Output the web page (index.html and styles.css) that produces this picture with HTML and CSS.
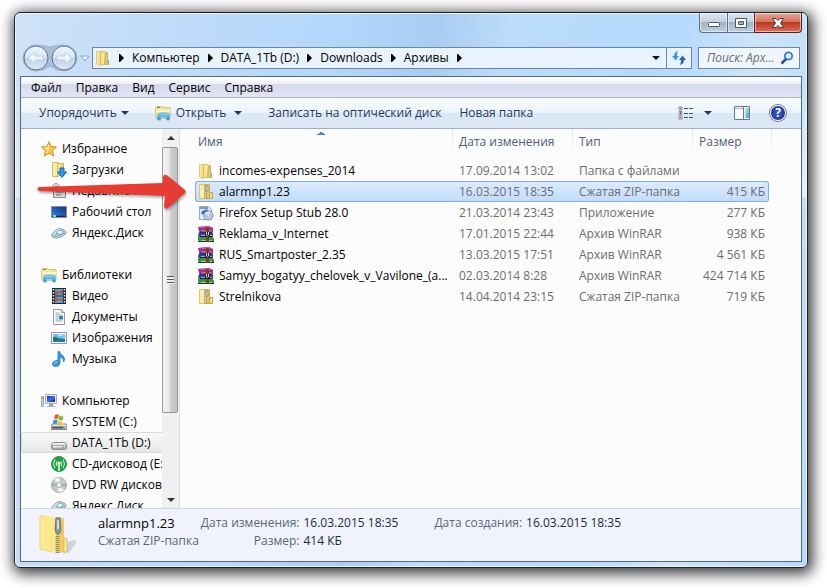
FILE: index.html
```html
<!DOCTYPE html>
<html lang="ru">
<head>
<meta charset="utf-8">
<title>Архивы</title>
<link rel="stylesheet" href="styles.css">
</head>
<body>
<svg class="defs" aria-hidden="true">
  <defs>
    <linearGradient id="gold" x1="0" x2="1" y1="0" y2="0"><stop offset="0" stop-color="#f9eba4"/><stop offset=".55" stop-color="#f3dc83"/><stop offset="1" stop-color="#dcb750"/></linearGradient>
    <linearGradient id="sky" x1="0" x2="0" y1="0" y2="1"><stop offset="0" stop-color="#8fdcf5"/><stop offset="1" stop-color="#2187cf"/></linearGradient>
    <linearGradient id="pane" x1="0" x2="1" y1="0" y2="1"><stop offset="0" stop-color="#c9eef6"/><stop offset="1" stop-color="#3fa3c4"/></linearGradient>
    <linearGradient id="metal" x1="0" x2="0" y1="0" y2="1"><stop offset="0" stop-color="#fbfbfc"/><stop offset="1" stop-color="#a3a8ad"/></linearGradient>
    <linearGradient id="screen" x1="0" x2="1" y1="0" y2="1"><stop offset="0" stop-color="#0b2fc4"/><stop offset=".5" stop-color="#3a73ea"/><stop offset="1" stop-color="#041a80"/></linearGradient>
    <linearGradient id="desktop" x1="0" x2="1" y1="1" y2="0"><stop offset="0" stop-color="#2f8be0"/><stop offset=".5" stop-color="#2358ac"/><stop offset="1" stop-color="#123274"/></linearGradient>
    <linearGradient id="orb" x1="0" x2="0" y1="0" y2="1"><stop offset="0" stop-color="#f0f6fc"/><stop offset=".48" stop-color="#d6e5f3"/><stop offset=".52" stop-color="#bfd2e4"/><stop offset="1" stop-color="#dcebf8"/></linearGradient>
  </defs>
  <symbol id="i-folder" viewBox="0 0 16 16"><path d="M1.500 1.500h6v13l-4 1-2-2z" fill="url(#gold)" stroke="#e3cb7c"/><path d="M5.500 3l3-2 2 1v11l-2 2-3-1z" fill="#f5e49a" stroke="#dcbb60"/><path d="M10.500 2.500h2v9l1 3h-4z" fill="#e4c563" stroke="#d6b254"/><path d="M13.500 10v4" stroke="#6ab4d9"/></symbol>
  <symbol id="i-zip" viewBox="0 0 16 16"><path d="M1.500 .5h5v14h-5z" fill="#fbefae" stroke="#e0c66e"/><path d="M6.500 .5h5v14h-5z" fill="url(#gold)" stroke="#d3b052"/><path d="M11.500 8.500h3v6h-3z" fill="#f5e192" stroke="#c69f3f"/><path d="M8 1v14" stroke="#5e6269" stroke-dasharray="1 1"/><path d="M9 2v13" stroke="#8d9097" stroke-dasharray="1 1"/><path d="M8 2h2v5h-2z" fill="#d8dde2" stroke="#6d7278" stroke-width=".6"/></symbol>
  <symbol id="i-lib" viewBox="0 0 16 16"><path d="M.5 2.500l1-1h5l1 1h7.500v11h-14z" fill="#f6e69d" stroke="#dcc170"/><path d="M2 2.500h3" stroke="#34a853"/><path d="M1 5h14v2H1z" fill="#fdf5c9"/><path d="M2.500 15v-4q0-3 3-3h6q3 0 3 3v4h-3v-3h-6v3z" fill="url(#sky)" stroke="#6bb6dc"/></symbol>
  <symbol id="i-star" viewBox="0 0 16 16"><path d="M8 .7l2.200 4.900 5.300.4-4 3.600 1.300 5.500L8 12.200l-4.800 2.900 1.300-5.500-4-3.600 5.300-.4z" fill="#fdc23a" stroke="#e08a28"/><path d="M8 2.500v8.500l-3.500 2L6 9 2.500 6.500l4-.5z" fill="#ffe48a"/></symbol>
  <symbol id="i-down" viewBox="0 0 16 16"><path d="M1.500 .5h6v14h-6z" fill="#f9ebaa" stroke="#d6b85b"/><path d="M6.500 1.500h6v12h-6z" fill="url(#gold)" stroke="#d6b85b"/><path d="M9 6h4v4h2.500L11 15.500 6.500 10H9z" fill="#2c98ec" stroke="#1365b9"/></symbol>
  <symbol id="i-recent" viewBox="0 0 16 16"><path d="M2.500 4.500h12v10h-12z" fill="#dedfe1" stroke="#85888c"/><circle cx="5" cy="4" r="3.500" fill="#f4f5f6" stroke="#999"/><path d="M5 2v2h2" stroke="#555" fill="none"/><path d="M5 9h7M5 12h5" stroke="#6e7378"/><path d="M9 5h4v3H9z" fill="#9da2a7"/></symbol>
  <symbol id="i-desk" viewBox="0 0 16 16"><path d="M.5 2.500h15v11H.5z" fill="#1f3a6b" stroke="#8392a8"/><path d="M1 3h14v8.500H1z" fill="url(#desktop)"/><path d="M1 12.500h14" stroke="#1a2a4c"/><path d="M2 12h3" stroke="#6ed1ff" stroke-width="2"/></symbol>
  <symbol id="i-yad" viewBox="0 0 16 16"><path d="M.5 10.500Q4 3.500 9 3.500q6 1.500 6.500 4.500-3 3.500-9 5-5.500 0-6-2.500z" fill="#c8dfe5" stroke="#7fa5b0"/><path d="M5 8.500l3.500-3.500 4 1.500-2.500 3z" fill="#f2f9fa" stroke="#7aa3ae"/><path d="M1 11q6 1 13-3" stroke="#7a9da7" fill="none"/></symbol>
  <symbol id="i-video" viewBox="0 0 16 16"><path d="M1 0h14v16H1z" fill="#222932"/><path d="M2.500 1v15M13.500 1v15" stroke="#e4e9ee" stroke-width="1.500" stroke-dasharray="1.500 1.500"/><path d="M4 1h8v6.500H4zM4 8.500h8V15H4z" fill="#4aa7e4"/><path d="M4 2l3 2 5-2v5L9 5 4 7zM4 9l4 2 4-1v4l-3-2-5 2z" fill="#bd5537"/></symbol>
  <symbol id="i-doc" viewBox="0 0 16 16"><path d="M2.500 .5h8l3 3v12h-11z" fill="#fcfdff" stroke="#9199a3"/><path d="M10.500 .5v3h3" fill="#dce4ee" stroke="#9199a3"/><path d="M4.500 4h4M4.500 6h7M4.500 8h3M4.500 10h3M4.500 12h7" stroke="#8da3b9"/><path d="M8 7h4v3.500H8z" fill="#377fbc"/></symbol>
  <symbol id="i-pic" viewBox="0 0 16 16"><path d="M.5 2.500h15v11H.5z" fill="#fff" stroke="#8f989f"/><path d="M2 4h12v8H2z" fill="#74c2ee"/><path d="M2 7q3-1 5 1l7 1v3H2z" fill="#277a69"/><path d="M2 10l12-1v3H2z" fill="#2a6fad"/><path d="M7 5h5" stroke="#fff"/></symbol>
  <symbol id="i-music" viewBox="0 0 16 16"><path d="M7 .5h1.500Q9 3 12 5q3 3 .5 6 .5-4-3.500-5v6q0 3-4 3.500-3.500 0-3.500-2.500 0-3 3.500-3.300L7 9.500z" fill="#2e9bea" stroke="#3f88c4"/><path d="M3 12.500q1-1.500 3-1.500" stroke="#a8e2ff" fill="none"/></symbol>
  <symbol id="i-pc" viewBox="0 0 16 16"><path d="M.5 3.500h2v10h-2z" fill="#d4d7da" stroke="#a2a6aa"/><path d="M4.500 1.500h11v9h-11z" fill="#eceeef" stroke="#a4abb2"/><path d="M6 3h8v6H6z" fill="url(#screen)"/><path d="M8 11h4v2H8z" fill="#9ca1a6"/><path d="M6 13.500h8" stroke="#b0b4b8"/><path d="M1 5h2" stroke="#35b32f"/></symbol>
  <symbol id="i-sys" viewBox="0 0 16 16"><path d="M1 10h14l1 2v3.500H0V12z" fill="url(#metal)" stroke="#70767c" stroke-width=".8"/><path d="M1 13.500h13" stroke="#525960" stroke-width="2"/><path d="M12 13.500h2" stroke="#43e063" stroke-width="2"/><path d="M4 1q2-1.500 4 0l-1 4q-2-1-4 0z" fill="#ef5a24"/><path d="M8.500 1.500q2 1.500 4 .5l-1 4q-2 1-4-.5z" fill="#7cbb26"/><path d="M2.700 6q2-1 4 0l-1 4q-2-1-4 0z" fill="#2a93dc"/><path d="M7.200 6.500q2 1.500 4 .5l-1 4q-2 1-4-.5z" fill="#fbc01f"/></symbol>
  <symbol id="i-drive" viewBox="0 0 16 16"><path d="M.5 9.500Q1 7.500 3 7.500h10q2 0 2.500 2v4q-1 1-2 1h-11q-1 0-2-1z" fill="url(#metal)" stroke="#8b8f93"/><path d="M1.500 10.500h13v2.500h-13z" fill="#e9ebed" stroke="#8b9095" stroke-width=".7"/><path d="M11 12h2" stroke="#2cba39"/></symbol>
  <symbol id="i-cd" viewBox="0 0 16 16"><circle cx="8" cy="8" r="7.500" fill="#21a244" stroke="#2f9549"/><path d="M4 3.500Q1 8 4 12M6 5.500Q4.500 8 6 10M12 3.500q3 4.500 0 8.500M10 5.500q1.500 2.500 0 4.500" stroke="#d6f7dc" fill="none"/><path d="M8 7v8" stroke="#eefbef" stroke-width="1.500"/><circle cx="8" cy="7" r="1.500" fill="#fff"/></symbol>
  <symbol id="i-dvd" viewBox="0 0 16 16"><circle cx="8" cy="8" r="7.500" fill="#c8cacc" stroke="#aaadb0"/><path d="M8 8L3 2.500Q6 0 9 1zM8 8l5 5.500q-3 2-6 1z" fill="#f3f4f5"/><path d="M8 8L1 6v4z" fill="#8fc49a"/><path d="M8 8l7-2v4z" fill="#aeb2b6"/><circle cx="8" cy="8" r="2.500" fill="#f6f6f6" stroke="#a5a9ad"/></symbol>
  <symbol id="i-setup" viewBox="0 0 16 16"><path d="M1.500 1.500h9l3 3v10h-12z" fill="#dfe8f5" stroke="#9aa8bd"/><path d="M2 3h8" stroke="#8e9aae" stroke-width="2"/><path d="M3 8q1-3 5-3l-1-2 4 3-3 3v-2q-2 0-3 3z" fill="#2e73d4"/><circle cx="10.500" cy="10.500" r="4.500" fill="#bdd0f0" stroke="#6a87c0"/><path d="M10.500 10.500L7 8.500q2-2.500 5-2z" fill="#f2f7ff"/><circle cx="10.500" cy="10.500" r="1.500" fill="#fff" stroke="#6c85b5" stroke-width=".6"/></symbol>
  <symbol id="i-rar" viewBox="0 0 16 16"><path d="M0 1l11-1 4 2v4l-1 1H2L1 5z" fill="#a42a8b"/><path d="M1 6l12-.5 2 1.500v4H2l-2-1z" fill="#31429c"/><path d="M0 10.500h14l2 2V16H2l-2-2z" fill="#379342"/><path d="M0 1l11-1 4 2H4z" fill="#c35aab"/><path d="M2 6h12M2 10.500h12" stroke="#26152f"/><path d="M3 5h11M3 9.500h11M3 14.500h11" stroke="#cfc8d8" stroke-width=".8"/><path d="M0 15.500h16" stroke="#17401d"/><path d="M8 1h3v15H8z" fill="#7d3b20"/><path d="M7 6h5v5H7z" fill="#222"/><path d="M8.500 6v3q1 1.500 2 0V6" fill="none" stroke="#d0d2d4"/></symbol>
  <symbol id="i-views" viewBox="0 0 16 14"><path d="M1 1h3v3H1zM1 5.500h3v3H1zM1 10h3v3H1z" fill="#fff" stroke="#7c8ba3"/><path d="M2 2.500h1" stroke="#2a62b8"/><path d="M2 7h1" stroke="#e03a26" stroke-width="2"/><path d="M2 11.500h1" stroke="#2a62b8"/><path d="M6 2.500h10M6 7.500h10M6 11.500h10" stroke="#44546c" stroke-dasharray="4 1"/></symbol>
  <symbol id="i-preview" viewBox="0 0 16 14"><path d="M.5 .5h15v13H.5z" fill="#fdfefe" stroke="#5f7a98"/><path d="M1 2.500h9" stroke="#a7b9cb"/><path d="M9.500 1v12" stroke="#5f7a98"/><path d="M11 2h4v10h-4z" fill="url(#pane)"/></symbol>
  <symbol id="a-down" viewBox="0 0 8 4"><path d="M0 0h8L4 4z" fill="currentColor"/></symbol>
  <symbol id="a-right" viewBox="0 0 5 8"><path d="M0 0h1l4 4-4 4H0z" fill="currentColor"/></symbol>
</svg>

<main class="window">
  <header class="titlebar">
    <div class="caption">
      <button class="cap" aria-label="Свернуть"><svg width="14" height="12" viewBox="0 0 14 12"><rect x="1.500" y="5.500" width="11" height="4" rx="1" fill="#fff" stroke="#4e5767"/></svg></button>
      <button class="cap" aria-label="Развернуть"><svg width="14" height="12" viewBox="0 0 14 12"><path d="M1.500 1.500h11v9h-11zM4.500 4.500v3h5v-3z" fill="#fff" fill-rule="evenodd" stroke="#4e5767"/></svg></button>
      <button class="cap close" aria-label="Закрыть"><svg width="14" height="12" viewBox="0 0 14 12"><path d="M1.500 1.500h3.500l2 2 2-2h3.500L9.500 6l3 4.500H9l-2-2-2 2H1.500L4.500 6z" fill="#fff" stroke="#5a3b42"/></svg></button>
    </div>
    <div class="navbar">
      <div class="travel">
        <svg width="56" height="28" viewBox="0 0 56 28" aria-hidden="true">
          <path d="M14 1q8 0 14 2 6-2 14-2a13 13 0 0 1 0 26q-8 0-14-5-6 5-14 5a13 13 0 0 1 0-26z" fill="#a7bfd7" stroke="#9fb5cc"/>
          <circle cx="14" cy="14" r="12" fill="url(#orb)" stroke="#5d7187"/><circle cx="42" cy="14" r="12" fill="url(#orb)" stroke="#5d7187"/>
          <path d="M6 14l7-6v4h8v4h-8v4zM50 14l-7-6v4h-8v4h8v4z" fill="#eef5fb" stroke="#c2d1df"/>
        </svg>
        <svg width="10" height="7" viewBox="0 0 10 7" aria-hidden="true"><path d="M1 1h8L5 6z" fill="#e7f1fb" stroke="#8fa5bd"/></svg>
      </div>
      <nav class="address" aria-label="Путь">
        <svg class="ico"><use href="#i-folder"/></svg>
        <svg class="ar"><use href="#a-right"/></svg><a href="#">Компьютер</a>
        <svg class="ar"><use href="#a-right"/></svg><a href="#">DATA_1Tb (D:)</a>
        <svg class="ar"><use href="#a-right"/></svg><a href="#">Downloads</a>
        <svg class="ar"><use href="#a-right"/></svg><a href="#">Архивы</a>
        <svg class="ar"><use href="#a-right"/></svg>
        <button class="history" aria-label="Предыдущие расположения"><svg class="ad"><use href="#a-down"/></svg></button>
        <button class="refresh" aria-label="Обновить"><svg width="16" height="14" viewBox="0 0 16 14"><path d="M7 0Q3 1 3 5H1l3.500 4.500L8 5H6q0-3 1-5z" fill="#3e9ad6"/><path d="M9 14q4-1 4-5h2l-3.500-4.500L8 9h2q0 3-1 5z" fill="#2368b0"/></svg></button>
      </nav>
      <label class="search"><input type="text" placeholder="Поиск: Арх..." aria-label="Поиск"><svg width="14" height="14" viewBox="0 0 14 14"><circle cx="8.500" cy="5" r="3.700" fill="#d9ecfb" stroke="#2f80c9" stroke-width="1.800"/><path d="M6 8l-4.500 4.500" stroke="#24529b" stroke-width="2.500"/></svg></label>
    </div>
  </header>

  <section class="client">
    <nav class="menubar">
      <button>Файл</button><button>Правка</button><button>Вид</button><button>Сервис</button><button>Справка</button>
    </nav>
    <div class="toolbar">
      <button class="organize">Упорядочить <svg class="ad"><use href="#a-down"/></svg></button>
      <button class="open"><svg class="ico"><use href="#i-lib"/></svg>Открыть</button>
      <button class="more" aria-label="Открыть с помощью"><svg class="ad"><use href="#a-down"/></svg></button>
      <button class="burn">Записать на оптический диск</button>
      <button>Новая папка</button>
      <div class="right">
        <button aria-label="Вид списка"><svg width="16" height="14"><use href="#i-views"/></svg></button>
        <button class="viewmenu" aria-label="Другие виды"><svg class="ad"><use href="#a-down"/></svg></button>
        <button class="preview" aria-label="Область просмотра"><svg width="16" height="14"><use href="#i-preview"/></svg></button>
        <button class="help" aria-label="Справка">?</button>
      </div>
    </div>

    <div class="content">
      <aside class="sidebar">
        <div class="tree">
          <ul>
            <li class="top"><svg class="ico"><use href="#i-star"/></svg>Избранное</li>
            <li><svg class="ico"><use href="#i-down"/></svg>Загрузки</li>
            <li><svg class="ico"><use href="#i-recent"/></svg>Недавние места</li>
            <li><svg class="ico"><use href="#i-desk"/></svg>Рабочий стол</li>
            <li><svg class="ico"><use href="#i-yad"/></svg>Яндекс.Диск</li>
          </ul>
          <ul>
            <li class="top"><svg class="ico"><use href="#i-lib"/></svg>Библиотеки</li>
            <li><svg class="ico"><use href="#i-video"/></svg>Видео</li>
            <li><svg class="ico"><use href="#i-doc"/></svg>Документы</li>
            <li><svg class="ico"><use href="#i-pic"/></svg>Изображения</li>
            <li><svg class="ico"><use href="#i-music"/></svg>Музыка</li>
          </ul>
          <ul>
            <li class="top"><svg class="ico"><use href="#i-pc"/></svg>Компьютер</li>
            <li><svg class="ico"><use href="#i-sys"/></svg>SYSTEM (C:)</li>
            <li class="current"><svg class="ico"><use href="#i-drive"/></svg>DATA_1Tb (D:)</li>
            <li><svg class="ico"><use href="#i-cd"/></svg>CD-дисковод (E:)</li>
            <li><svg class="ico"><use href="#i-dvd"/></svg>DVD RW дисковод</li>
            <li><svg class="ico"><use href="#i-yad"/></svg>Яндекс.Диск</li>
          </ul>
        </div>
        <div class="scroll">
          <button class="up" aria-label="Вверх"><svg class="ad"><use href="#a-down"/></svg></button>
          <div class="thumb"><i></i></div>
          <button aria-label="Вниз"><svg class="ad"><use href="#a-down"/></svg></button>
        </div>
      </aside>

      <div class="files">
        <table>
          <colgroup><col class="c-name"><col class="c-mid"><col class="c-mid"><col class="c-size"><col class="c-end"></colgroup>
          <thead><tr><th class="sorted">Имя</th><th>Дата изменения</th><th>Тип</th><th colspan="2">Размер</th></tr></thead>
          <tbody>
            <tr><td><span class="file"><svg class="ico"><use href="#i-folder"/></svg>incomes-expenses_2014</span></td><td>17.09.2014 13:02</td><td>Папка с файлами</td><td></td></tr>
            <tr class="selected"><td><span class="file"><svg class="ico"><use href="#i-zip"/></svg>alarmnp1.23</span></td><td>16.03.2015 18:35</td><td>Сжатая ZIP-папка</td><td>415 КБ</td></tr>
            <tr><td><span class="file"><svg class="ico"><use href="#i-setup"/></svg>Firefox Setup Stub 28.0</span></td><td>21.03.2014 23:43</td><td>Приложение</td><td>277 КБ</td></tr>
            <tr><td><span class="file"><svg class="ico"><use href="#i-rar"/></svg>Reklama_v_Internet</span></td><td>17.01.2015 22:44</td><td>Архив WinRAR</td><td>938 КБ</td></tr>
            <tr><td><span class="file"><svg class="ico"><use href="#i-rar"/></svg>RUS_Smartposter_2.35</span></td><td>13.03.2015 17:51</td><td>Архив WinRAR</td><td>4 561 КБ</td></tr>
            <tr><td><span class="file"><svg class="ico"><use href="#i-rar"/></svg>Samyy_bogatyy_chelovek_v_Vavilone_(a...</span></td><td>02.03.2014 8:28</td><td>Архив WinRAR</td><td>424 714 КБ</td></tr>
            <tr><td><span class="file"><svg class="ico"><use href="#i-zip"/></svg>Strelnikova</span></td><td>14.04.2014 23:15</td><td>Сжатая ZIP-папка</td><td>719 КБ</td></tr>
          </tbody>
        </table>
      </div>

      <svg class="pointer" width="156" height="40" viewBox="0 0 156 40" aria-hidden="true"><path d="M4 13L128 9V3q1-4 5-1L150 16q1 2 0 3L133 34q-4 2-4-2l1-10L4 17q-3-2 0-4z" fill="#e63c31"/></svg>
    </div>

    <footer class="details">
      <svg width="40" height="42" viewBox="0 0 40 42" aria-hidden="true"><path d="M26 38l3-10 6-2q3 0 2 3L30 39z" fill="#cdd2dc"/><path d="M1 2l12 2v34L1 35z" fill="#fbeb9b" stroke="#ecd27a"/><path d="M3 1l20 3v35L6 36z" fill="#fbe88c"/><path d="M17 3l8 1v34l-8 1z" fill="#efcd63"/><path d="M25 24l3 1v12l-3 2z" fill="#fdf0ae" stroke="#dcb64f"/><path d="M18.500 22v17" stroke="#8d8a80" stroke-width="4" stroke-dasharray="1 1"/><path d="M17 4h4l1 12q-2 7-5 3l-1-4z" fill="#8e979f" stroke="#6b747d"/><path d="M19 6v9" stroke="#eef1f3" stroke-width="1.500"/></svg>
      <div class="title"><strong>alarmnp1.23</strong><span>Сжатая ZIP-папка</span></div>
      <dl class="first"><dt>Дата изменения:</dt><dd>16.03.2015 18:35</dd><dt>Размер:</dt><dd>414 КБ</dd></dl>
      <dl><dt>Дата создания:</dt><dd>16.03.2015 18:35</dd></dl>
    </footer>
  </section>
</main>
</body>
</html>
```
FILE: styles.css
```css
* { box-sizing: border-box; }

body {
  margin: 0;
  height: 100vh;
  padding: 12px 19px 20px 14px;
  background: #fff;
  font: 12px/16px "Open Sans", "Noto Sans", sans-serif;
  color: #000;
  overflow: hidden;
}

button {
  font: inherit;
  color: inherit;
  background: none;
  border: 0;
  padding: 0;
  display: flex;
  align-items: center;
  white-space: nowrap;
}

svg { display: block; flex: none; }
.defs { position: absolute; width: 0; height: 0; }
.ico { width: 16px; height: 16px; }
.ad { width: 8px; height: 4px; }
.ar { width: 5px; height: 8px; }

.window {
  height: 100%;
  display: flex;
  flex-direction: column;
  padding: 0 5px 5px;
  border: 1px solid #1d2127;
  border-radius: 6px;
  background:
    linear-gradient(rgba(224, 239, 253, 0) 60px, rgba(228, 241, 253, .8)) left top / 6px 184px no-repeat,
    linear-gradient(rgba(224, 239, 253, 0) 60px, rgba(236, 245, 254, .8)) right top / 6px 184px no-repeat,
    linear-gradient(100deg, #cfe2f7 0, #bcdafa 22%, #b3d8fc 36%, #a9cdf2 48%, #bbdcfb 56%, #b4dafd 75%, #cde4f8 84%, #b6d9fa 100%);
  box-shadow: inset 0 0 0 1px #eaf5ff, 2px 3px 14px 3px rgba(0, 0, 0, .75);
}

.titlebar { display: flex; flex-direction: column; height: 63px; }

.caption { display: flex; align-self: flex-end; height: 20px; }
.cap {
  width: 27px;
  justify-content: center;
  border: 1px solid #5f6e80;
  border-top: 0;
  border-right-width: 0;
  background: linear-gradient(#dbe7f2 0, #c4d2e0 45%, #9fb3c7 50%, #bccfe1 100%);
  box-shadow: inset 0 0 0 1px rgba(255, 255, 255, .5);
}
.cap:first-child { width: 28px; border-radius: 0 0 0 4px; }
.close {
  width: 48px;
  border-color: #5b1d1c;
  border-right-width: 1px;
  border-radius: 0 0 4px 0;
  background: linear-gradient(#e5a797 0, #d4735d 45%, #bb3722 50%, #d9725a 100%);
}

.navbar { display: flex; align-items: center; padding: 11px 2px 0 2px; }
.travel { display: flex; align-items: center; gap: 2px; width: 70px; }

.address, .search {
  height: 22px;
  display: flex;
  align-items: center;
  border: 1px solid #6f86a0;
  background: #e9f3fd;
}
.address { flex: 1; min-width: 0; gap: 8px; padding-left: 2px; }
.address a { color: #000; text-decoration: none; white-space: nowrap; }
.history { margin-left: auto; margin-right: -2px; color: #000a5c; }
.refresh { align-self: stretch; width: 25px; justify-content: center; border-left: 1px solid #6f86a0; }
.search { width: 102px; margin-left: 6px; padding: 0 5px 0 8px; background: #f0f6fd; }
.search input {
  flex: 1;
  min-width: 0;
  padding: 0;
  border: 0;
  outline: 0;
  background: none;
  font: italic 12px/16px "Open Sans", "Noto Sans", sans-serif;
}
.search input::placeholder { color: #6d6d6d; opacity: 1; }

.client {
  position: relative;
  flex: 1;
  min-height: 0;
  display: flex;
  flex-direction: column;
  border: 1px solid #56677a;
  background: #fcfcfc;
}

.menubar {
  display: flex;
  gap: 14px;
  height: 21px;
  padding: 2px 10px 0;
  border-bottom: 1px solid #a9b4cb;
  background: linear-gradient(#fff 0, #eff1f9 33%, #d5daec 34%, #e1e5f4 100%);
}

.toolbar {
  display: flex;
  align-items: center;
  height: 31px;
  padding: 0 15px 0 18px;
  border-bottom: 1px solid #a0afc8;
  background: linear-gradient(#fafdff 0, #eaf3fb 50%, #dce7f5 51%, #dde8f6 100%);
  color: #1e395b;
}
.organize { gap: 4px; }
.open { gap: 5px; margin-left: 26px; }
.more { margin-left: 8px; }
.burn { margin: 0 18px 0 26px; }
.right { display: flex; align-items: center; margin-left: auto; }
.viewmenu { margin-left: 10px; }
.preview { margin-left: 22px; }
.help {
  width: 16px;
  height: 16px;
  margin-left: 20px;
  justify-content: center;
  border: 1px solid #e9edf6;
  border-radius: 50%;
  background: radial-gradient(#3d62d2, #10298a);
  box-shadow: 0 0 0 1px #6f7682;
  color: #fff;
  font-weight: bold;
}

.content { position: relative; flex: 1; min-height: 0; display: flex; }

.sidebar { display: flex; width: 159px; border-right: 1px solid #d5e2f2; }
.tree { flex: 1; min-width: 0; overflow: hidden; padding-top: 9px; }
.tree ul { margin: 0 0 21px; padding: 0; list-style: none; }
.tree li {
  display: flex;
  align-items: center;
  gap: 5px;
  height: 21px;
  padding-left: 30px;
  white-space: nowrap;
}
.tree .top { padding-left: 20px; }
.tree .current {
  border: 1px solid #dadada;
  border-right: 0;
  border-radius: 3px 0 0 3px;
  padding-left: 29px;
  background: linear-gradient(#fafafa, #e6e6e6);
}

.scroll { display: flex; flex-direction: column; width: 17px; background: #f0f0f0; }
.scroll button { height: 17px; justify-content: center; color: #333; }
.scroll .up svg { transform: rotate(180deg); }
.thumb {
  height: 266px;
  margin: 1px 1px auto 0;
  display: grid;
  place-items: center;
  border: 1px solid #979797;
  border-radius: 2px;
  background: linear-gradient(90deg, #f5f5f5 0, #e6e6e8 48%, #cfcfd2 52%, #bfc0c4 100%);
}
.thumb i { width: 7px; height: 8px; background: repeating-linear-gradient(#55585c 0 1px, #eee 1px 3px); }

.files { flex: 1; min-width: 0; padding-left: 15px; }
table { width: 577px; table-layout: fixed; border-collapse: separate; border-spacing: 0; }
.c-name { width: 258px; }
.c-mid { width: 120px; }
.c-size { width: 76px; }
.c-end { width: 3px; }
th {
  height: 31px;
  padding: 5px 6px 0;
  vertical-align: top;
  text-align: left;
  font-weight: normal;
  color: #4c607a;
  background: linear-gradient(#d8e4f3, #fcfcfc) right top / 1px 25px no-repeat;
}
th:first-child { padding-left: 3px; }
.sorted {
  background:
    conic-gradient(from 135deg at 50% 0, #4d86ad 90deg, transparent 0) 122px 2px / 8px 4px no-repeat,
    linear-gradient(#d8e4f3, #fcfcfc) right top / 1px 25px no-repeat;
}
td {
  height: 21px;
  padding: 0 6px;
  border: 0 solid #84acdd;
  white-space: nowrap;
  color: #6d6d6d;
}
td:first-child { padding-left: 3px; color: #000; }
td:nth-child(4) { padding: 0 4px 0 0; text-align: right; }
.file { display: flex; align-items: center; gap: 5px; }
.selected td {
  border-width: 1px 0;
  background: linear-gradient(#dcebfc, #c1dcfc);
}
.selected td:first-child { border-left-width: 1px; border-radius: 3px 0 0 3px; padding-left: 2px; }
.selected td:last-child { border-right-width: 1px; border-radius: 0 3px 3px 0; padding-right: 3px; }

.pointer { position: absolute; left: 14px; top: 45px; filter: drop-shadow(1px 2px 1px rgba(0, 0, 0, .3)); }

.details {
  display: flex;
  height: 53px;
  padding: 5px 18px 0;
  border-top: 1px solid #c9d6e9;
  background: #f0f3fb;
  white-space: nowrap;
  line-height: 18px;
}
.title { display: flex; flex-direction: column; margin-left: 19px; color: #5a6779; }
.title strong { font-size: 13px; font-weight: normal; color: #000; }
.details dl { display: grid; grid-template-columns: auto auto; column-gap: 4px; align-content: start; margin: 0 0 0 36px; }
.details .first { margin-left: 2px; }
.details dt { text-align: right; color: #5a6779; }
.details dd { margin: 0; color: #1e2b40; }
```
